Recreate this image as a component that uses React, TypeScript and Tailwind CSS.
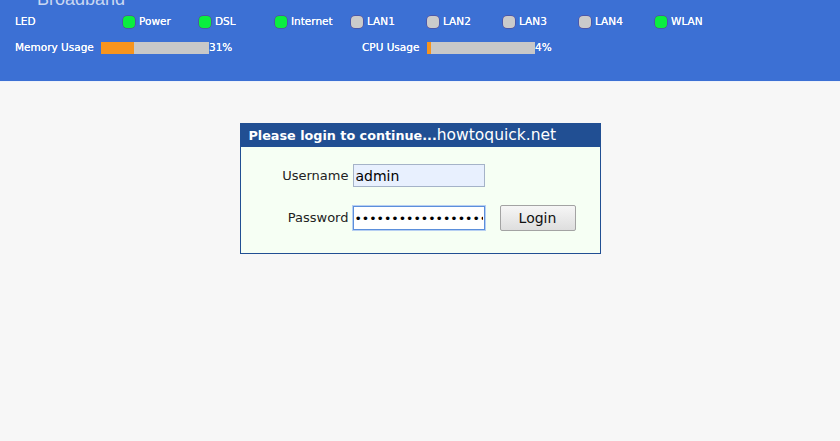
import React from "react";

const leds = [
  { name: "Power", on: true },
  { name: "DSL", on: true },
  { name: "Internet", on: true },
  { name: "LAN1", on: false },
  { name: "LAN2", on: false },
  { name: "LAN3", on: false },
  { name: "LAN4", on: false },
  { name: "WLAN", on: true },
];

function UsageBar({ percent }: { percent: number }) {
  return (
    <div className="w-[108px] h-[12px] bg-[#c8c8c8] flex">
      {/* fill width comes from data */}
      <div className="h-full bg-[#f7941d]" style={{ width: `${percent}%` }} />
    </div>
  );
}

export default function App() {
  return (
    <div className="w-[840px] h-[441px] bg-[#f7f7f7] overflow-hidden font-['DejaVu_Sans',sans-serif]">
      {/* status header */}
      <div className="h-[82px] bg-[#3c70d4] border-b border-[#eef2fa] overflow-hidden text-white">
        <div className="h-[8px] pl-[37px] overflow-hidden">
          <div className="-mt-[11px] text-[18px] leading-[20px] text-[#c9d7f2] font-['Liberation_Sans',sans-serif]">
            Broadband
          </div>
        </div>

        <div className="mt-[8px] pl-[15px] flex items-center h-[12px] text-[10.5px] [text-shadow:0_0_0.5px_#ffffff]">
          <div className="w-[108px]">LED</div>
          {leds.map((led) => (
            <div key={led.name} className="w-[76px] flex items-center">
              <span
                className={
                  led.on
                    ? "w-[12px] h-[12px] rounded-[4px] bg-[#0aef3f] shadow-[0_0_0_0.5px_#5a3f80]"
                    : "w-[12px] h-[12px] rounded-[4px] bg-[#cbcbcb] shadow-[0_0_0_0.5px_#5a3f80]"
                }
              />
              <span className="ml-[4px]">{led.name}</span>
            </div>
          ))}
        </div>

        <div className="mt-[14px] pl-[15px] flex items-center h-[12px] text-[10.5px] [text-shadow:0_0_0.5px_#ffffff]">
          <div className="w-[86px]">Memory Usage</div>
          <UsageBar percent={31} />
          <div className="w-[153px]">31%</div>
          <div className="w-[65px]">CPU Usage</div>
          <UsageBar percent={4} />
          <div>4%</div>
        </div>
      </div>

      {/* login box */}
      <div className="flex justify-center mt-[41px]">
        <div className="w-[361px] border border-[#214f93] bg-[#f6fff4]">
          <div className="h-[23px] bg-[#214f93] flex items-center pl-[8px] text-white whitespace-nowrap">
            <span className="font-bold text-[12.75px]">Please login to continue...</span>
            <span className="text-[15.5px]">howtoquick.net</span>
          </div>
          <div className="grid grid-cols-[108px_132px_auto] gap-x-[4px] gap-y-[18px] items-center pt-[17px] pb-[22px] text-[13px] text-[#222]">
            <div className="text-right">Username</div>
            <input
              defaultValue="admin"
              className="h-[23px] px-[2px] bg-[#e8f0fe] border border-[#a5b3c8] text-[14px] text-black outline-none font-['DejaVu_Sans',sans-serif]"
            />
            <div />
            <div className="text-right">Password</div>
            <input
              type="password"
              defaultValue="adminadminadminadmin12345678"
              className="h-[24px] px-[1px] bg-white border border-[#5b8fdb] shadow-[0_0_0_1px_#b7cff2] text-[12.5px] text-black outline-none font-['DejaVu_Sans',sans-serif]"
            />
            <button className="ml-[11px] w-[76px] h-[26px] border border-[#a3a3a3] rounded-[2px] bg-gradient-to-b from-[#f6f6f6] to-[#dedede] text-[14px] text-[#111] font-['DejaVu_Sans',sans-serif]">
              Login
            </button>
          </div>
        </div>
      </div>
    </div>
  );
}
